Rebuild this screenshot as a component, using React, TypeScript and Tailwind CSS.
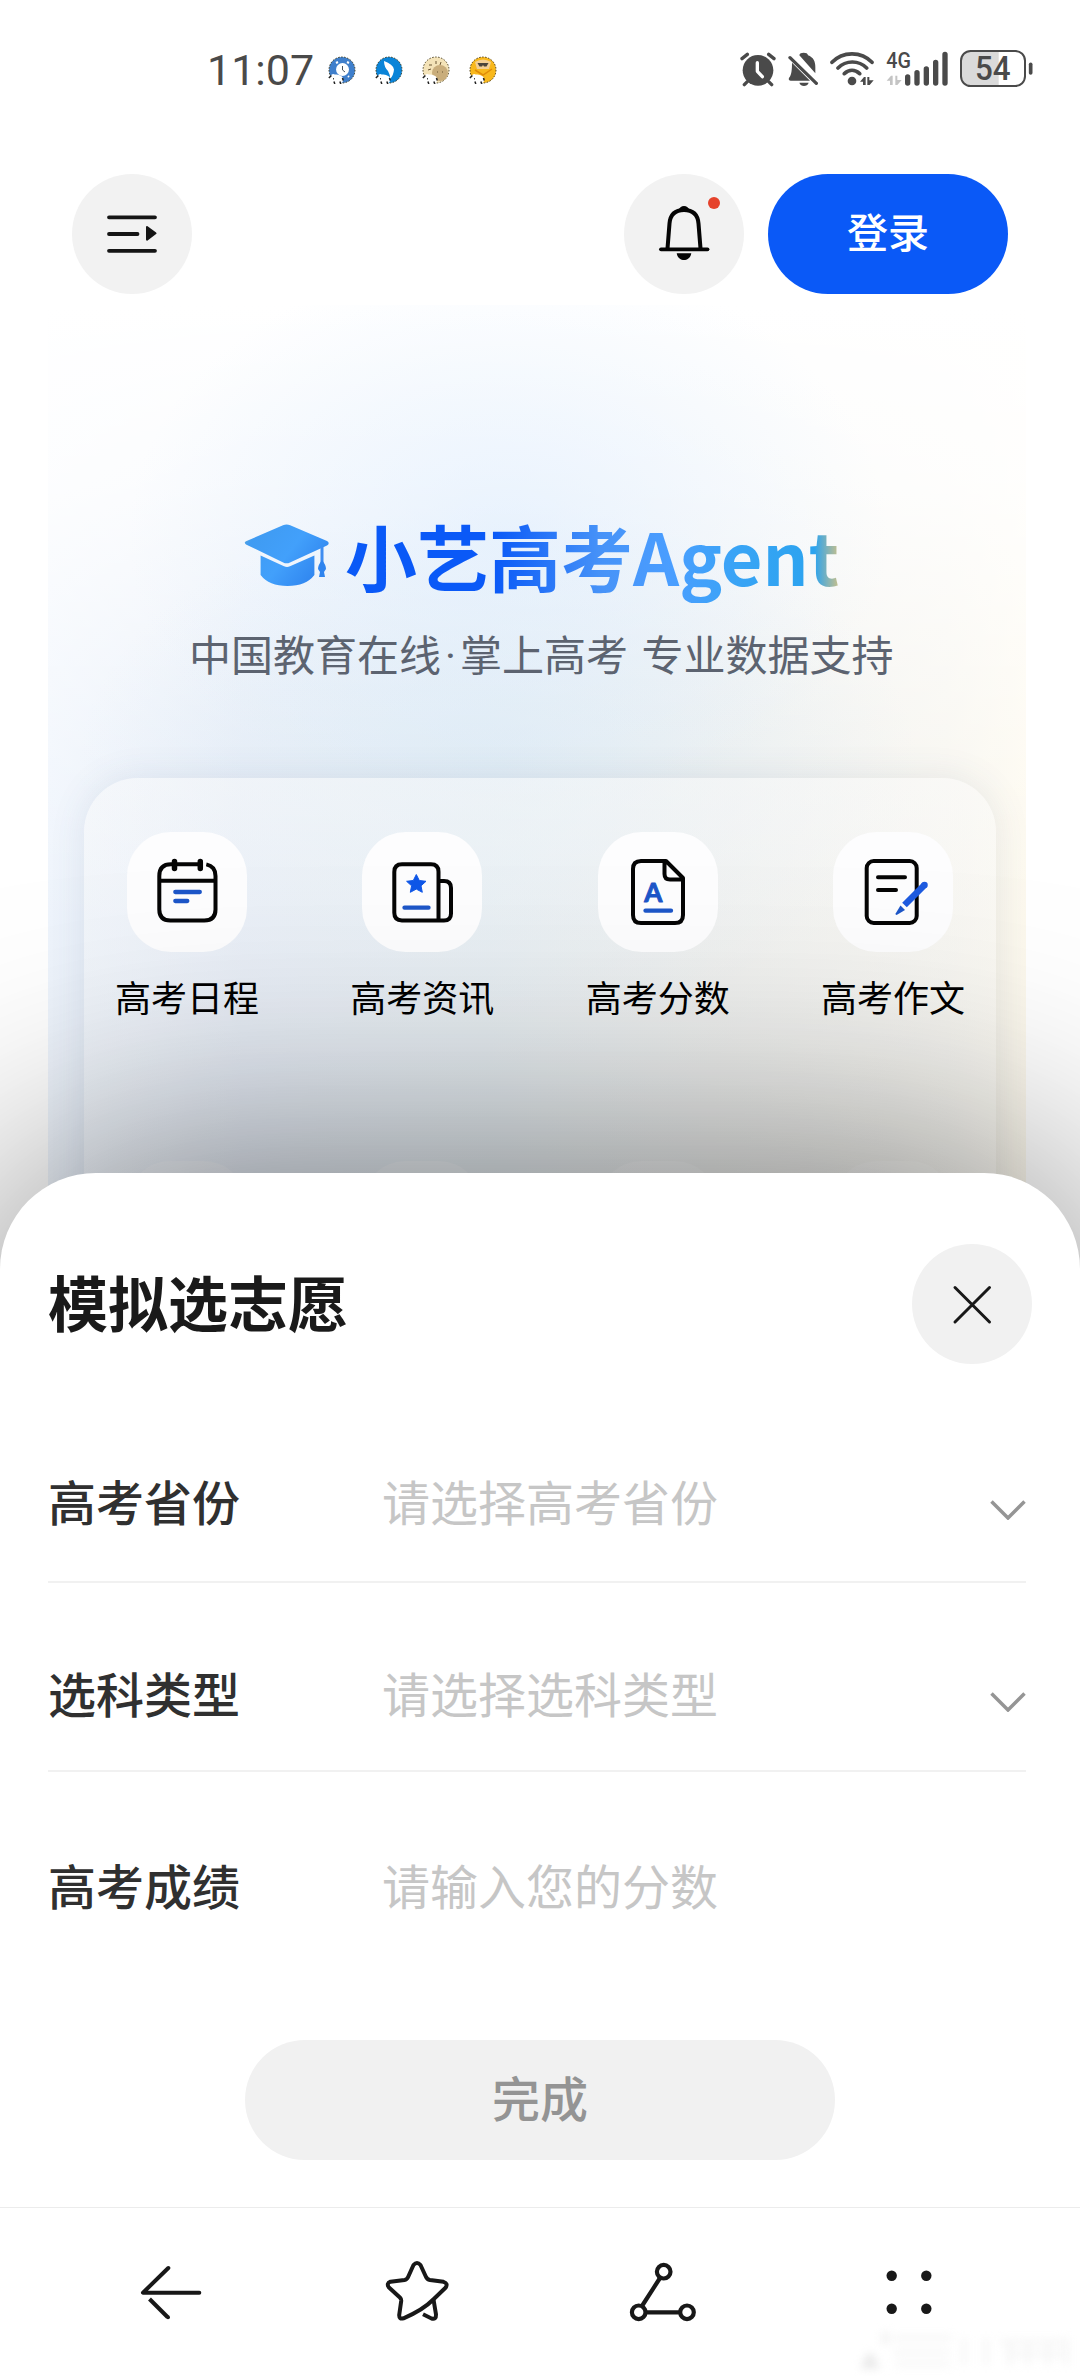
import { ReactNode } from "react";
import clsx from "clsx";

type Entry = {
  label: string;
  icon: ReactNode;
};

type Field = {
  label: string;
  placeholder: string;
  select: boolean;
  className: string;
};

const AlarmIcon = () => (
  <svg className="w-9 h-10" viewBox="60 60 108 120" fill="none">
    <circle cx="114" cy="121" r="46" fill="#4a4a4a" />
    <path
      d="M66 86l16-13M162 86l-16-13M82 155l-9 9M146 155l9 9"
      stroke="#4a4a4a"
      strokeWidth="10"
      strokeLinecap="round"
    />
    <path
      d="M112 98v26l15 16"
      stroke="#fff"
      strokeWidth="10"
      strokeLinecap="round"
      strokeLinejoin="round"
    />
  </svg>
);

const BellOffIcon = () => (
  <svg className="w-[30px] h-10" viewBox="204 60 90 120" fill="none">
    <path
      d="M238 76c0-10 26-10 26 0 16 6 22 18 22 36v18zM216 98l54 54h-58c-7 0-7-7-3-11 6-8 7-24 7-43zM238 158h28c-4 13-24 13-28 0z"
      fill="#4a4a4a"
    />
    <path
      d="M210 83l79 77"
      stroke="#4a4a4a"
      strokeWidth="10"
      strokeLinecap="round"
    />
  </svg>
);

const WifiIcon = () => (
  <svg className="w-11 h-10" viewBox="330 60 132 120" fill="none">
    <path
      d="M336 97c32-34 88-34 120 0M354 114c24-24 62-24 86 0M373 131c14-13 32-13 46 0"
      stroke="#4a4a4a"
      strokeWidth="11"
      strokeLinecap="round"
    />
    <circle cx="396" cy="153" r="13" fill="#4a4a4a" />
    <path d="M420 155l12-14h5v24h-8v-10zM442 141h6v10h13l-12 14h-7z" fill="#4a4a4a" />
  </svg>
);

const SignalIcon = () => (
  <svg className="w-[62px] h-10 overflow-visible" viewBox="498 60 186 120" fill="none">
    <text
      x="499"
      y="115"
      fontSize="65"
      fontWeight="500"
      fontFamily="Roboto, sans-serif"
      textLength="74"
      lengthAdjust="spacingAndGlyphs"
      fill="#4a4a4a"
    >
      4G
    </text>
    <path d="M500 152l13-15h5v28h-8v-13zM526 137h6v13h13l-13 15h-6z" fill="#c4c4c4" />
    <path
      d="M563 141v18M591 128v31M619 117v42M647 97v62M675 73v86"
      stroke="#4a4a4a"
      strokeWidth="16"
      strokeLinecap="round"
    />
  </svg>
);

const BatteryIcon = () => (
  <svg className="w-[74px] h-10" viewBox="720 60 222 120" fill="none">
    <path d="M752 64h84v103h-84q-28 0-28-28V92q0-28 28-28z" fill="#dadada" />
    <rect x="723" y="63" width="192" height="105" rx="29" stroke="#4a4a4a" strokeWidth="6" />
    <path d="M932 103v26" stroke="#4a4a4a" strokeWidth="11" strokeLinecap="round" />
    <text
      x="765"
      y="151"
      fontSize="98"
      fontWeight="500"
      fontFamily="Roboto, sans-serif"
      textLength="107"
      lengthAdjust="spacingAndGlyphs"
      fill="#4a4a4a"
    >
      54
    </text>
  </svg>
);

// little sheep that sits on each notification badge
const Sheep = () => (
  <g transform="translate(0 5) scale(.85)">
    <path d="M3 18q2-4 5-2 4-1 8 2 3 3 1 7-5 4-11 2-4-4-3-9z" fill="#fff" />
    <path
      d="M1 20l3-3M7 24l1 3M14 24l1 3M6 21h1M17 20l1 3"
      stroke="#222"
      strokeWidth="1.8"
    />
  </g>
);

const notifications = [
  <svg key="clock" className="w-7 h-7" viewBox="0 0 28 28" fill="none">
    <circle cx="14" cy="14" r="13" fill="#3f7fcc" stroke="#3b3a20" strokeDasharray="1.5 1.5" />
    <circle cx="14.5" cy="13.5" r="6.5" fill="#fff" />
    <path d="M8 7l2-1M21 7l-2-1M9 20l-1 1M20 20l1 1" stroke="#fff" strokeWidth="2" />
    <path d="M14.5 10v4l2.5 2" stroke="#46525e" />
    <Sheep />
  </svg>,
  <svg key="wing" className="w-7 h-7" viewBox="0 0 28 28" fill="none">
    <circle cx="14" cy="14" r="13" fill="#0a84d8" stroke="#3b3a20" strokeDasharray="1.5 1.5" />
    <path d="M9 5q9 3 10 8.500-.5 6-4 9.500 0-5-2-8-4-4-4-10z" fill="#fff" />
    <Sheep />
  </svg>,
  <svg key="cookie" className="w-7 h-7" viewBox="0 0 28 28" fill="none">
    <circle cx="14" cy="14" r="13" fill="#f4e3b8" stroke="#4d4326" strokeDasharray="1.5 1.5" />
    <circle cx="18" cy="17" r="8" fill="#c9ad7b" />
    <path d="M7 9h3M14 5v3M19 6l-1 3M15 16h1M20 16h1M6 14l3-1" stroke="#6b5635" />
    <Sheep />
  </svg>,
  <svg key="bee" className="w-7 h-7" viewBox="0 0 28 28" fill="none">
    <circle cx="14" cy="14" r="13" fill="#f8b81c" stroke="#4d3a10" strokeDasharray="1.5 1.5" />
    <path d="M6 6q8-5 16 0l-2 7H8z" fill="#f3cf94" />
    <path d="M8.500 7h11l-2 3.500h-2.500l-1-1.500-1 1.500h-2.500z" fill="#4a443c" />
    <path d="M6 14l8 5 9-6" stroke="#e08b08" strokeWidth="1.5" />
    <Sheep />
  </svg>,
];

const MenuIcon = () => (
  <svg className="w-full h-full" viewBox="0 0 120 120" fill="none">
    <path
      d="M37 43.3h46M37 60h28.500M37 76.800h46"
      stroke="#151515"
      strokeWidth="3.8"
      strokeLinecap="round"
    />
    <path
      d="M75 53l8.500 6.300-8.500 6.300z"
      fill="#151515"
      stroke="#151515"
      strokeWidth="2"
      strokeLinejoin="round"
    />
  </svg>
);

const BellIcon = () => (
  <svg className="w-full h-full" viewBox="0 0 120 120" fill="none">
    <path
      d="M43.500 74.500l2-25c.8-9.500 6-13.500 14.500-13.500s13.700 4 14.500 13.500l2 25"
      stroke="#050505"
      strokeWidth="4"
    />
    <path d="M54 37q2-5 6-5t6 5q-6 2-12 0z" fill="#050505" />
    <path d="M37 75.300h46.500" stroke="#050505" strokeWidth="3.8" strokeLinecap="round" />
    <path d="M52.700 79.300h14.600c-1.500 9-13.100 9-14.600 0z" fill="#050505" />
    <circle cx="90" cy="29" r="6" fill="#e5422b" />
  </svg>
);

const CapIcon = () => (
  <svg className="w-[86px] h-[66px]" viewBox="0 0 86 66" fill="none">
    <defs>
      <linearGradient id="cap" x1="0" y1="0" x2="86" y2="66" gradientUnits="userSpaceOnUse">
        <stop stopColor="#86b8b8" />
        <stop offset=".16" stopColor="#3f9bf2" />
        <stop offset=".5" stopColor="#42a0fb" />
        <stop offset="1" stopColor="#2779ea" />
      </linearGradient>
    </defs>
    <path
      d="M39 3.300q3.600-1.700 7.200 0L83 19q3.400 2 0 4.500L46 40.500q-3.400 1.700-6.800 0L2 22.500q-2.500-1.700 0-3.200z"
      fill="url(#cap)"
    />
    <path
      d="M16.600 33.500L40 44.300q3 1.300 6 0l24.400-10.800V53Q62 64 43.500 64T16.600 53z"
      fill="url(#cap)"
    />
    <path d="M78 25v16" stroke="#3f8df0" strokeWidth="3" />
    <path d="M78 38q4 5 4 9l-2 3 1 5h-6l1-5-2-3q0-4 4-9z" fill="#2f84ee" />
  </svg>
);

const CalendarIcon = () => (
  <svg className="w-full h-full" viewBox="0 0 120 120" fill="none">
    <path
      d="M73 32.300H44q-11.700 0-11.700 11.700v33.500q0 11 11 11h34q11.200 0 11.200-11V44q0-9.800-9.200-11.600M32.300 48.700h56"
      stroke="#050505"
      strokeWidth="4"
    />
    <path
      d="M47.500 29.500v7M73.300 29.500v7"
      stroke="#050505"
      strokeWidth="5.5"
      strokeLinecap="round"
    />
    <path
      d="M48.300 60h24.500M48.300 69h12"
      stroke="#1d56c8"
      strokeWidth="4.3"
      strokeLinecap="round"
    />
  </svg>
);

const NewsIcon = () => (
  <svg className="w-full h-full" viewBox="0 0 120 120" fill="none">
    <path
      d="M40 32.300h29q7.500 0 7.500 7.500v48.700H40q-7.700 0-7.700-7.700V40q0-7.700 7.700-7.700zM76.500 49h5.500q7 0 7 7v25.500q0 7-7 7h-6"
      stroke="#050505"
      strokeWidth="4"
    />
    <path
      d="M54.300 42.500l3 6 6.700.8-5 4.500 1.300 6.500-6-3.200-6 3.200 1.300-6.500-5-4.500 6.700-.8z"
      fill="#0f57e8"
      stroke="#0f57e8"
      strokeLinejoin="round"
    />
    <path d="M42.500 75.700h24" stroke="#1d56c8" strokeWidth="4.3" strokeLinecap="round" />
  </svg>
);

const ScoreIcon = () => (
  <svg className="w-full h-full" viewBox="0 0 120 120" fill="none">
    <path
      d="M68 29H43q-8 0-8 8v46q0 8 8 8h34q8 0 8-8V46zM66.500 29v13q0 5.500 5.500 5.500h13"
      stroke="#050505"
      strokeWidth="4"
      strokeLinejoin="round"
    />
    <text
      x="55.3"
      y="69.5"
      textAnchor="middle"
      fontSize="26"
      fontWeight="700"
      fontFamily="Lato, sans-serif"
      fill="#1d56c8"
      stroke="#1d56c8"
      strokeWidth="1"
      strokeLinejoin="round"
    >
      A
    </text>
    <path d="M47.500 78.700h25.500" stroke="#1d56c8" strokeWidth="4.3" strokeLinecap="round" />
  </svg>
);

const EssayIcon = () => (
  <svg className="w-full h-full" viewBox="0 0 120 120" fill="none">
    <rect x="33.7" y="29" width="50" height="62" rx="7" stroke="#050505" strokeWidth="4" />
    <path d="M45 45.300h27M45 58h18" stroke="#050505" strokeWidth="4" strokeLinecap="round" />
    <path d="M91.500 53L71.500 73" stroke="#1e5be0" strokeWidth="6.5" />
    <circle cx="91.5" cy="53" r="3.25" fill="#1e5be0" />
    <path d="M67.500 73.500l4.500 4.500-7.500 4.500q-2.500 1.200-1.700-1.200z" fill="#1d56c8" />
  </svg>
);

const BackIcon = () => (
  <svg className="w-18 h-18" viewBox="0 0 72 72" fill="none" stroke="#181818" strokeWidth="4">
    <path d="M33.300 12L8 36.700h56.300" strokeLinecap="round" strokeLinejoin="round" />
    <path d="M14.500 43l18 18" />
    <circle cx="33" cy="61.3" r="2" fill="#181818" stroke="none" />
  </svg>
);

const StarIcon = () => (
  <svg className="w-18 h-18" viewBox="0 0 72 72" fill="none" stroke="#181818" strokeWidth="4">
    <path
      d="M32.500 9q3.500-4 7 0l5.300 11.500q1.200 3 4.200 3.500l13.500 1.800q5 1.500 2 6L52.300 43.500Q42 54 22.500 62.300q-4.500 1.200-4.300-3.300l2-14q.2-2-1.300-3.500L8 31.500q-3-4 1.500-5.800l14-1.700q2.500-.4 3.600-3z"
      strokeLinejoin="round"
    />
    <path d="M52.500 43.500L55 58.500q.2 5.500-4.500 4L42 58.300" />
  </svg>
);

const ShareIcon = () => (
  <svg className="w-18 h-18" viewBox="0 0 72 72" fill="none" stroke="#181818" strokeWidth="4.2">
    <path d="M33 22L15 50M18.500 56.300H53" />
    <circle cx="36.7" cy="15.7" r="6.8" />
    <circle cx="11.7" cy="56.3" r="6.8" />
    <circle cx="60" cy="56.3" r="6.8" />
  </svg>
);

const MoreIcon = () => (
  <svg className="w-18 h-18" viewBox="0 0 72 72" fill="#181818">
    <circle cx="18.7" cy="19.7" r="5.2" />
    <circle cx="53.3" cy="19.7" r="5.2" />
    <circle cx="18.7" cy="52.7" r="5.2" />
    <circle cx="53.3" cy="52.7" r="5.2" />
  </svg>
);

const entries: Entry[] = [
  { label: "高考日程", icon: <CalendarIcon /> },
  { label: "高考资讯", icon: <NewsIcon /> },
  { label: "高考分数", icon: <ScoreIcon /> },
  { label: "高考作文", icon: <EssayIcon /> },
];

const fields: Field[] = [
  {
    label: "高考省份",
    placeholder: "请选择高考省份",
    select: true,
    className: "pt-[100px] pb-[45px] border-b-2",
  },
  {
    label: "选科类型",
    placeholder: "请选择选科类型",
    select: true,
    className: "pt-[73px] pb-[42px] border-b-2",
  },
  {
    label: "高考成绩",
    placeholder: "请输入您的分数",
    select: false,
    className: "pt-[76px]",
  },
];

const StatusBar = () => (
  <div className="flex items-center justify-between h-[140px] pl-[207px] pr-[46px]">
    <div className="flex items-center">
      <span className="w-[121px] font-[Roboto,sans-serif] text-[43px] leading-none text-[#4a4a4a]">
        11:07
      </span>
      <div className="flex gap-[19px]">{notifications}</div>
    </div>
    <div className="flex items-center gap-3">
      <AlarmIcon />
      <BellOffIcon />
      <WifiIcon />
      <SignalIcon />
      <BatteryIcon />
    </div>
  </div>
);

const Header = () => (
  <div className="flex items-center pt-[34px] px-[72px]">
    <button className="w-30 h-30 rounded-full bg-[#f2f2f2]">
      <MenuIcon />
    </button>
    <button className="w-30 h-30 ml-auto rounded-full bg-[#f2f2f2]">
      <BellIcon />
    </button>
    <button className="w-60 h-30 ml-6 pb-1.5 rounded-full bg-[#0a59f7] text-white text-[41px] font-medium">
      登录
    </button>
  </div>
);

const Hero = () => (
  <div className="mt-[11px] ml-12 w-[978px] h-[965px] pt-[202px] overflow-hidden bg-[radial-gradient(ellipse_380px_280px_at_460px_230px,rgba(222,237,255,0.6),rgba(222,237,255,0)),radial-gradient(ellipse_420px_260px_at_450px_460px,rgba(214,232,245,0.5),rgba(214,232,245,0)),linear-gradient(to_bottom,#ffffff_0px,rgba(255,255,255,0.85)_180px,rgba(255,255,255,0)_620px),linear-gradient(to_right,#eef4fc,#e0e8f5_20%,#dfe8ee_45%,#ebecea_68%,#f6f4ed_92%,#fdf9ee)]">
    <div className="flex items-center pl-[196px] h-24">
      <CapIcon />
      <h1 className="ml-[15px] text-[72px] leading-24 font-bold whitespace-nowrap bg-[linear-gradient(90deg,#0a59f7_0%,#0a59f7_30%,#4793f8_52%,#4a9eff_66%,#38a4f5_80%,#2ba3ef_95%,#c9c08a_100%)] bg-clip-text text-transparent">
        小艺高考Agent
      </h1>
    </div>
    <p className="mt-5 pl-[141px] text-[42px] leading-[60px] text-[#5c6370] whitespace-nowrap [word-spacing:4px]">
      中国教育在线
      <span className="inline-block w-[19px] text-center font-[Roboto,sans-serif] leading-none">
        ·
      </span>
      掌上高考 专业数据支持
    </p>
    <div className="mt-[95px] ml-9 w-[912px] h-[600px] px-[31px] pt-[54px] rounded-[54px] bg-[linear-gradient(to_bottom,rgba(250,250,250,0.5),rgba(244,246,247,0.3)_300px)] shadow-[0_0_36px_rgba(70,90,120,0.1)]">
      <div className="flex justify-between">
        {entries.map(({ label, icon }) => (
          <div key={label} className="flex flex-col items-center w-36">
            <div className="w-30 h-30 rounded-[44px] bg-[#fdfdfe]">{icon}</div>
            <span className="mt-5 text-[36px] leading-12 text-black whitespace-nowrap">
              {label}
            </span>
          </div>
        ))}
      </div>
      <div className="flex justify-between mt-[141px] px-3">
        {entries.map(({ label }) => (
          <div key={label} className="w-30 h-30 rounded-[44px] bg-white/25" />
        ))}
      </div>
    </div>
  </div>
);

const FieldRow = ({ label, placeholder, select, className }: Field) => (
  <div
    className={clsx(
      "flex items-center w-[978px] border-[#f1f1f1] text-[48px] leading-[72px]",
      className
    )}
  >
    <span className="w-[334px] font-medium text-[#303030]">{label}</span>
    <span className="text-[#c6c6c6]">{placeholder}</span>
    {select && (
      <svg className="w-9 h-5 ml-auto mt-5" viewBox="0 0 36 20" fill="none">
        <path d="M1.500 1.500L18 18 34.500 1.500" stroke="#959595" strokeWidth="3.5" />
      </svg>
    )}
  </div>
);

const Sheet = () => (
  <div className="relative -mt-[97px] h-[1034px] px-12 pt-[71px] rounded-t-[96px] bg-white shadow-[0_0_300px_rgba(0,0,0,0.55)]">
    <div className="flex items-center justify-between">
      <h2 className="pb-1.5 text-[60px] leading-none font-bold text-[#1a1a1a]">模拟选志愿</h2>
      <button className="w-30 h-30 rounded-full bg-[#f1f1f1]">
        <svg className="w-full h-full" viewBox="0 0 120 120" fill="none">
          <path
            d="M43 43.500l34.500 34.500M77.500 43.500L43 78"
            stroke="#181818"
            strokeWidth="3"
            strokeLinecap="round"
          />
        </svg>
      </button>
    </div>
    {fields.map((field) => (
      <FieldRow key={field.label} {...field} />
    ))}
    <button className="block w-[590px] h-30 mt-30 mx-auto pb-2 rounded-full bg-[#f1f1f1] text-[48px] font-medium text-[#949494]">
      完成
    </button>
  </div>
);

const NavBar = () => (
  <div className="relative grid grid-cols-4 place-items-center h-[169px] px-12 border-t border-[#ececec] bg-white">
    <BackIcon />
    <StarIcon />
    <ShareIcon />
    <MoreIcon />
    <svg
      className="absolute right-0 bottom-0 w-[220px] h-[48px] blur-[4px]"
      viewBox="0 0 220 48"
      fill="none"
      stroke="#f6f6f6"
      strokeWidth="5"
    >
      <path d="M4 38l6-10 6 10z" fill="#e6e6e6" stroke="#e9e9e9" />
      <path d="M25 4v12" stroke="#ececec" />
      <path d="M32 10h60M34 24h56M36 36h54M104 10v28M126 10v28M140 14h68M146 26h60M150 14v24M168 14v24M188 14v24M206 10v28" />
    </svg>
  </div>
);

const App = () => {
  return (
    <div className="w-[1080px] h-[2376px] overflow-hidden bg-white font-['Noto_Sans_CJK_SC',sans-serif]">
      <StatusBar />
      <Header />
      <Hero />
      <Sheet />
      <NavBar />
    </div>
  );
};

export default App;
